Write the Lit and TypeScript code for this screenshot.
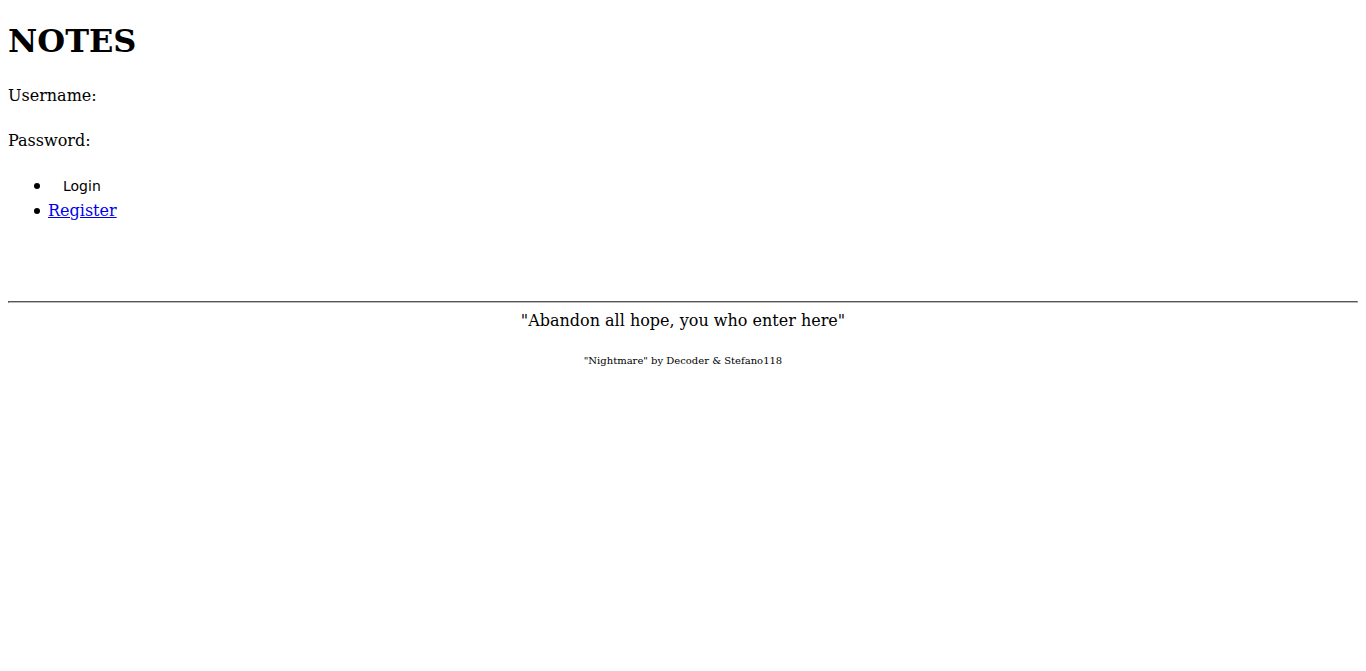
import { LitElement, html, css } from "lit";
import { customElement } from "lit/decorators.js";

@customElement("app-root")
export class AppRoot extends LitElement {
  static styles = css`
    :host {
      display: block;
      padding: 22px 8px 8px;
      font-family: "DejaVu Serif", serif;
      font-size: 16px;
      line-height: 19px;
      color: #000;
      background: #fff;
    }
    h1 {
      margin: 0 0 26px;
      font-size: 32px;
      line-height: 38px;
      font-weight: bold;
    }
    .fields {
      display: grid;
      gap: 26px;
      margin-bottom: 23px;
    }
    .field {
      display: flex;
      align-items: center;
    }
    .field input {
      flex: 1;
      height: 19px;
      margin: 0;
      padding: 0 4px;
      border: 0;
      outline: 0;
      background: transparent;
      font: inherit;
    }
    ul {
      margin: 0 0 78px;
      padding-left: 26px;
      list-style: none;
    }
    li {
      display: flex;
      align-items: center;
      gap: 8px;
      height: 25px;
    }
    li::before {
      content: "";
      width: 6px;
      height: 6px;
      border-radius: 50%;
      background: #000;
    }
    button {
      height: 25px;
      margin: 0;
      padding: 0 15px;
      border: 0;
      background: transparent;
      color: inherit;
      font-family: "DejaVu Sans", sans-serif;
      font-size: 14px;
    }
    a {
      color: #0000ee;
      text-decoration: underline;
    }
    footer {
      text-align: center;
    }
    hr {
      margin: 0 0 8px;
      border: 1px solid;
      border-color: #555 #bbb #bbb #555;
    }
    p {
      margin: 0 0 21px;
    }
    small {
      display: block;
      font-size: 10px;
    }
  `;

  render() {
    return html`
      <main>
        <h1>NOTES</h1>
        <form @submit=${(e: Event) => e.preventDefault()}>
          <div class="fields">
            <div class="field">
              <label for="username">Username:</label>
              <input id="username" type="text" name="username" />
            </div>
            <div class="field">
              <label for="password">Password:</label>
              <input id="password" type="password" name="password" />
            </div>
          </div>
          <ul>
            <li><button type="submit">Login</button></li>
            <li><a href="#register">Register</a></li>
          </ul>
        </form>
      </main>
      <footer>
        <hr />
        <p>"Abandon all hope, you who enter here"</p>
        <small>"Nightmare" by Decoder &amp; Stefano118</small>
      </footer>
    `;
  }
}
